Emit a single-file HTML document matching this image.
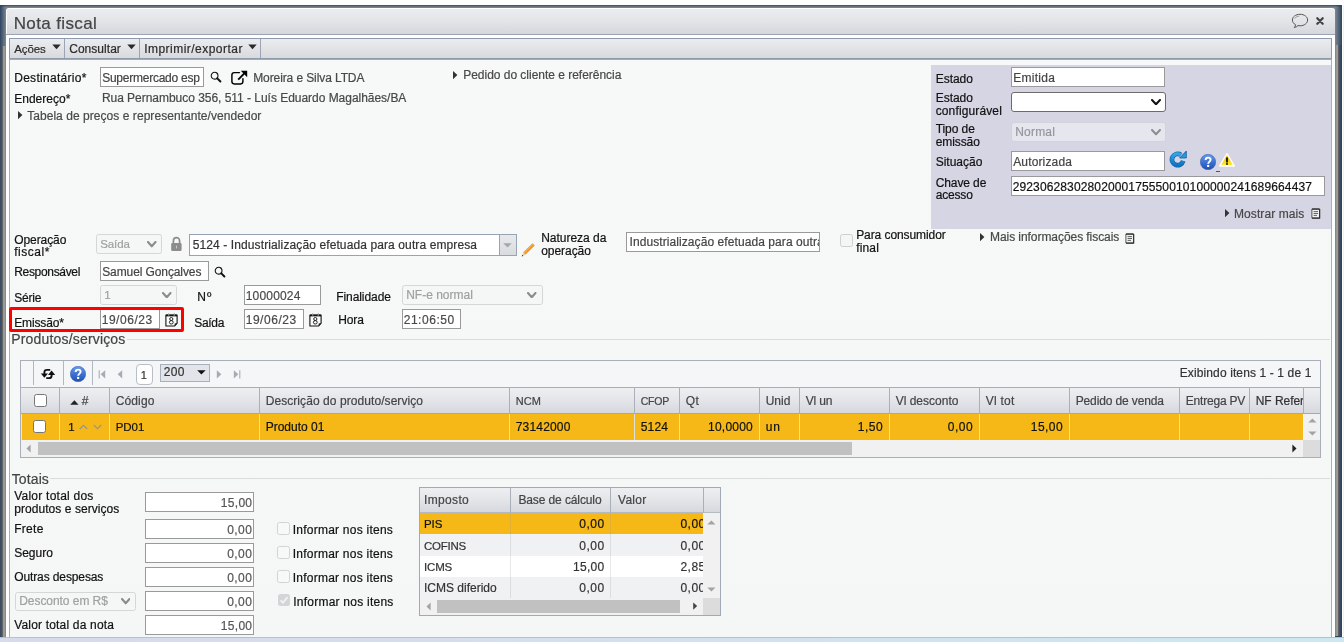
<!DOCTYPE html>
<html><head><meta charset="utf-8"><title>Nota fiscal</title><style>
html,body{margin:0;padding:0}
body{will-change:transform;width:1344px;height:642px;position:relative;overflow:hidden;background:#fff;font-family:"Liberation Sans",sans-serif;}
body div,body span,body svg{position:absolute;box-sizing:content-box}
.t{white-space:nowrap;display:block;-webkit-text-stroke:0.2px currentColor}
</style></head><body>
<div style="left:0px;top:5px;width:1342px;height:633px;background:#2f4661"></div>
<div style="left:0px;top:5px;width:1342px;height:3px;background:linear-gradient(#364b63,#636f7d 45%,#858c94)"></div>
<div style="left:1335px;top:5px;width:7px;height:3px;background:radial-gradient(ellipse 7px 3.4px at 0px 3px,#838a93 0,#6b7684 35%,#44566b 70%,#2e4560 100%)"></div>
<div style="left:0px;top:5px;width:6px;height:3px;background:radial-gradient(ellipse 6px 3.4px at 6px 3px,#838a93 0,#6b7684 35%,#44566b 70%,#2e4560 100%)"></div>
<div style="left:6px;top:8px;width:3px;height:3px;background:#838a93"></div>
<div style="left:1332px;top:8px;width:3px;height:3px;background:#838a93"></div>
<div style="left:0px;top:8px;width:6px;height:40px;background:linear-gradient(90deg,#2e4560,#808791)"></div>
<div style="left:1335px;top:8px;width:7px;height:38px;background:linear-gradient(90deg,#808791,#2e4560)"></div>
<div style="left:0px;top:46px;width:2px;height:591px;background:linear-gradient(90deg,#34485f,#46566b)"></div>
<div style="left:2px;top:46px;width:4px;height:591px;background:linear-gradient(90deg,#5c5c5c 0,#6a6a6a 25%,#999 26%,#9a9a9a 75%,#8a8a8a 76%)"></div>
<div style="left:1335px;top:45px;width:4px;height:591px;background:linear-gradient(90deg,#858789 0,#858789 25%,#999 26%,#9a9a9a 75%,#666 76%,#5c5c5c)"></div>
<div style="left:1339px;top:45px;width:3px;height:591px;background:linear-gradient(90deg,#46566b,#28405c)"></div>
<div style="left:1343px;top:5px;width:1px;height:633px;background:#f2f2f2"></div>
<div style="left:0px;top:637px;width:1344px;height:5px;background:linear-gradient(90deg,#d6dbee,#d3e0f0 50%,#cde8f3)"></div>
<div style="left:0px;top:637px;width:1344px;height:1px;background:linear-gradient(90deg,#b9bfd2,#a9c4d4)"></div>
<div style="left:6px;top:8px;width:1329px;height:629px;background:#fff;border-radius:3px 3px 0 0"></div>
<div style="left:7px;top:9px;width:1328px;height:25px;background:linear-gradient(#ebecee,#e3e4e7 50%,#d5d7dc);border-radius:2px 3px 0 0"></div>
<div style="left:6px;top:34px;width:1329px;height:1px;background:#9ca4b2"></div>
<span class="t" style="left: 13.7px; top: 14.4px; font-size: 17px; line-height: 19px; color: rgb(68, 68, 68); letter-spacing: 0.38px;">Nota fiscal</span>
<svg style="left:1290px;top:12px" width="20" height="18" viewBox="0 0 20 18"><path d="M10 2.3 C5.6 2.3 2.4 4.8 2.4 8 C2.4 10 3.6 11.7 5.6 12.7 C5.5 13.8 5 14.8 4.2 15.5 C5.8 15.3 7.1 14.6 8 13.6 C8.6 13.7 9.3 13.8 10 13.8 C14.4 13.8 17.6 11.2 17.6 8 C17.6 4.8 14.4 2.3 10 2.3Z" fill="none" stroke="#555" stroke-width="1"></path><path d="M4.6 6.6 C5.6 4.9 7.4 4.2 9.2 4.1" fill="none" stroke="#777" stroke-width="0.7"></path></svg>
<svg style="left:1315px;top:16px" width="10" height="10" viewBox="0 0 10 10"><path d="M2.3 2.3 L7.7 7.7 M7.7 2.3 L2.3 7.7" stroke="#444" stroke-width="2.3" stroke-linecap="round"></path></svg>
<div style="left:9px;top:38px;width:1321px;height:19px;border:1px solid #8f9aab;background:linear-gradient(#ebecef,#e2e3e7 50%,#d8dade)"></div>
<span class="t" style="left: 14.2px; top: 42.1px; font-size: 11.5px; line-height: 14px; color: rgb(43, 43, 43); letter-spacing: -0.07px;">Ações</span>
<svg style="left:52px;top:44px" width="9" height="6" viewBox="0 0 9 6"><path d="M0.3 0.5 L8.7 0.5 L4.5 5.2Z" fill="#2a2a2a"></path></svg>
<div style="left:64px;top:39px;width:1px;height:19px;background:#9aa4b4"></div>
<span class="t" style="left: 69.2px; top: 42.1px; font-size: 12px; line-height: 14px; color: rgb(43, 43, 43); letter-spacing: 0.04px;">Consultar</span>
<svg style="left:126.5px;top:44px" width="9" height="6" viewBox="0 0 9 6"><path d="M0.3 0.5 L8.7 0.5 L4.5 5.2Z" fill="#2a2a2a"></path></svg>
<div style="left:139px;top:39px;width:1px;height:19px;background:#9aa4b4"></div>
<span class="t" style="left: 144.2px; top: 42.1px; font-size: 12px; line-height: 14px; color: rgb(43, 43, 43); letter-spacing: 0.47px;">Imprimir/exportar</span>
<svg style="left:247.5px;top:44px" width="9" height="6" viewBox="0 0 9 6"><path d="M0.3 0.5 L8.7 0.5 L4.5 5.2Z" fill="#2a2a2a"></path></svg>
<div style="left:260px;top:39px;width:1px;height:19px;background:#9aa4b4"></div>
<div style="left:9px;top:59px;width:1323px;height:1px;background:#a3abb7"></div>
<div style="left:9px;top:60px;width:1321px;height:577px;border-left:1px solid #a7b0c0;border-right:1px solid #a7b0c0;background:linear-gradient(#f7f9f8,#f6f7f7 60%,#f5f6f6)"></div>
<span class="t" style="left: 14.2px; top: 71.1px; font-size: 12px; line-height: 14px; color: rgb(17, 17, 17); letter-spacing: 0.29px;">Destinatário*</span>
<div style="left:100px;top:67px;width:102px;height:18px;border:1px solid #9a9a9a;background:#fff;"></div>
<span class="t" style="left: 102.2px; top: 71.1px; font-size: 12px; line-height: 14px; color: rgb(68, 68, 68); letter-spacing: -0.25px;">Supermercado esp</span>
<svg style="left:209.5px;top:71.3px" width="13" height="13" viewBox="0 0 13 13"><circle cx="4.6" cy="4.7" r="3.4" fill="none" stroke="#111" stroke-width="1.05"></circle><path d="M7.3 7.4 L10.4 10.5" stroke="#111" stroke-width="2" stroke-linecap="round"></path></svg>
<svg style="left:230px;top:69px" width="19" height="17" viewBox="0 0 19 17"><path d="M9.5 3.6 H4.2 Q1.9 3.6 1.9 5.9 V12.6 Q1.9 14.9 4.2 14.9 H10.6 Q12.9 14.9 12.9 12.6 V9.6" fill="none" stroke="#000" stroke-width="1.45" stroke-linecap="round"></path><path d="M8.2 10.6 L14.6 4.2" stroke="#000" stroke-width="1.9"></path><path d="M10.8 1.8 H17.2 V8.2Z" fill="#000"></path></svg>
<span class="t" style="left: 253.2px; top: 71.1px; font-size: 12px; line-height: 14px; color: rgb(72, 72, 72); letter-spacing: -0.1px;">Moreira e Silva LTDA</span>
<svg style="left:452.9px;top:70.8px" width="5" height="9" viewBox="0 0 5 9"><path d="M0 0 L4.4 4.1 L0 8.2Z" fill="#333"></path></svg>
<span class="t" style="left: 463.2px; top: 68.3px; font-size: 12px; line-height: 14px; color: rgb(72, 72, 72); letter-spacing: -0.02px;">Pedido do cliente e referência</span>
<span class="t" style="left: 14.2px; top: 92.1px; font-size: 12px; line-height: 14px; color: rgb(17, 17, 17); letter-spacing: 0.02px;">Endereço*</span>
<span class="t" style="left: 101.9px; top: 90.9px; font-size: 12px; line-height: 14px; color: rgb(72, 72, 72); letter-spacing: -0.03px;">Rua Pernambuco 356, 511 - Luís Eduardo Magalhães/BA</span>
<svg style="left:17.8px;top:110.8px" width="5" height="9" viewBox="0 0 5 9"><path d="M0 0 L4.4 4.1 L0 8.2Z" fill="#333"></path></svg>
<span class="t" style="left: 27.2px; top: 109.1px; font-size: 12px; line-height: 14px; color: rgb(72, 72, 72); letter-spacing: 0.05px;">Tabela de preços e representante/vendedor</span>
<div style="left:931px;top:65px;width:400px;height:164px;background:#d6d5e4"></div>
<span class="t" style="left: 935.7px; top: 71.6px; font-size: 12px; line-height: 14px; color: rgb(17, 17, 17); letter-spacing: -0.03px;">Estado</span>
<div style="left:1011px;top:67px;width:152px;height:18px;border:1px solid #9a9a9a;background:#fff;"></div>
<span class="t" style="left: 1013.2px; top: 71.1px; font-size: 12px; line-height: 14px; color: rgb(68, 68, 68); letter-spacing: 0.28px;">Emitida</span>
<span class="t" style="left: 935.7px; top: 91.3px; font-size: 12px; line-height: 14px; color: rgb(17, 17, 17); letter-spacing: -0.03px;">Estado</span>
<span class="t" style="left: 935.7px; top: 104.3px; font-size: 12px; line-height: 14px; color: rgb(17, 17, 17); letter-spacing: 0.13px;">configurável</span>
<div style="left:1011px;top:92px;width:153px;height:18px;border:1px solid #6b6b6b;border-radius:3px;background:#fff"></div>
<svg style="left:1151px;top:98.5px" width="10" height="6.5" viewBox="0 0 10 6.5"><path d="M1 1 L5.0 5.3 L9 1" fill="none" stroke="#111" stroke-width="2" stroke-linecap="round" stroke-linejoin="round"></path></svg>
<span class="t" style="left: 935.7px; top: 121.9px; font-size: 12px; line-height: 14px; color: rgb(17, 17, 17); letter-spacing: -0.07px;">Tipo de</span>
<span class="t" style="left: 935.7px; top: 134.8px; font-size: 12px; line-height: 14px; color: rgb(17, 17, 17); letter-spacing: -0.08px;">emissão</span>
<div style="left:1011px;top:122px;width:153px;height:17.5px;border:1px solid #d2d2da;border-radius:3px;background:#e6e6ee"></div>
<span class="t" style="left: 1015.2px; top: 125.2px; font-size: 12px; line-height: 14px; color: rgb(150, 150, 158); letter-spacing: 0.21px;">Normal</span>
<svg style="left:1151px;top:129px" width="10" height="6.5" viewBox="0 0 10 6.5"><path d="M1 1 L5.0 5.3 L9 1" fill="none" stroke="#8c8c92" stroke-width="2" stroke-linecap="round" stroke-linejoin="round"></path></svg>
<span class="t" style="left: 935.7px; top: 155.4px; font-size: 12px; line-height: 14px; color: rgb(17, 17, 17); letter-spacing: 0px;">Situação</span>
<div style="left:1011px;top:151px;width:152px;height:18px;border:1px solid #9a9a9a;background:#fff;"></div>
<span class="t" style="left: 1013.2px; top: 155.1px; font-size: 12px; line-height: 14px; color: rgb(68, 68, 68); letter-spacing: 0.15px;">Autorizada</span>
<span class="t" style="left: 935.7px; top: 175.6px; font-size: 12px; line-height: 14px; color: rgb(17, 17, 17); letter-spacing: -0.1px;">Chave de</span>
<span class="t" style="left: 935.7px; top: 188.3px; font-size: 12px; line-height: 14px; color: rgb(17, 17, 17); letter-spacing: -0.17px;">acesso</span>
<div style="left:1011px;top:176px;width:312px;height:18px;border:1px solid #9a9a9a;background:#fff;"></div>
<span class="t" style="left: 1012.7px; top: 180.1px; font-size: 12px; line-height: 14px; color: rgb(17, 17, 17); letter-spacing: 0.13px;">29230628302802000175550010100000241689664437</span>
<svg style="left:1224.8px;top:208.9px" width="5" height="9" viewBox="0 0 5 9"><path d="M0 0 L4.4 4.1 L0 8.2Z" fill="#333"></path></svg>
<span class="t" style="left: 1234px; top: 206.6px; font-size: 12px; line-height: 14px; color: rgb(72, 72, 72); letter-spacing: 0.08px;">Mostrar mais</span>
<svg style="left:1310.5px;top:208.4px" width="10" height="11" viewBox="0 0 10 11"><rect x="0.9" y="0.9" width="7.7" height="9.2" rx="0.4" fill="#f1f1f4" stroke="#444" stroke-width="0.9"></rect><path d="M0.9 1.2 H8.6 M8.6 1 V10.1 H0.9" stroke="#333" stroke-width="1.2" fill="none"></path><path d="M2.6 3.6 H7 M2.6 5.5 H7 M2.6 7.4 H6" stroke="#555" stroke-width="0.9"></path></svg>
<span class="t" style="left: 14.2px; top: 232.9px; font-size: 12px; line-height: 14px; color: rgb(17, 17, 17); letter-spacing: -0.07px;">Operação</span>
<span class="t" style="left: 14.2px; top: 244.8px; font-size: 12px; line-height: 14px; color: rgb(17, 17, 17); letter-spacing: 0.53px;">fiscal*</span>
<div style="left:96px;top:234px;width:63.5px;height:18px;border:1px solid #d5d6d6;border-radius:2.5px;background:#f5f6f6"></div>
<span class="t" style="left: 100.2px; top: 237.1px; font-size: 11.5px; line-height: 14px; color: rgb(160, 160, 160); letter-spacing: -0.09px;">Saída</span>
<svg style="left:147.2px;top:241px" width="9.5" height="6.5" viewBox="0 0 9.5 6.5"><path d="M1 1 L4.75 5.3 L8.5 1" fill="none" stroke="#8c8c8c" stroke-width="2.1" stroke-linecap="round" stroke-linejoin="round"></path></svg>
<svg style="left:170px;top:236px" width="13" height="16" viewBox="0 0 13 16"><path d="M3.4 7.6 V5 a3.1 3.3 0 0 1 6.2 0 V7.6" fill="none" stroke="#8c8c8c" stroke-width="1.7"></path><rect x="1.2" y="7" width="10.4" height="8" rx="1.2" fill="#8c8c8c"></rect><path d="M6.5 9.6 V12.4" stroke="#c9c9c9" stroke-width="1.1"></path></svg>
<div style="left:189px;top:234px;width:326px;height:20px;border:1px solid #98a3b3;background:#fff"></div>
<div style="left:499.4px;top:235px;width:15.6px;height:20px;background:linear-gradient(#e8e9ec,#d9dbdf);border-left:1px solid #98a3b3"></div>
<svg style="left:503.4px;top:243px" width="9" height="5" viewBox="0 0 9 5"><path d="M0.2 0.2 H8.8 L4.5 4.4Z" fill="#a1a7b1"></path></svg>
<span class="t" style="left: 192.7px; top: 238.1px; font-size: 12px; line-height: 14px; color: rgb(51, 51, 51); letter-spacing: 0.11px;">5124 - Industrialização efetuada para outra empresa</span>
<svg style="left:520px;top:241px" width="17" height="17" viewBox="0 0 17 17"><path d="M4.3 12.6 L13.6 3.4" stroke="#f0962b" stroke-width="3.3"></path><path d="M3.7 11.1 L13 1.9" stroke="#f6b45c" stroke-width="0.9" transform="translate(0.25,0.95)"></path><path d="M1.8 15.4 L3.1 11.4 L5.5 13.8Z" fill="#f1d3a0"></path><path d="M1.8 15.4 L2.4 13.7 L3.4 14.7Z" fill="#222"></path></svg>
<span class="t" style="left: 541.2px; top: 231.2px; font-size: 12px; line-height: 14px; color: rgb(17, 17, 17); letter-spacing: -0.02px;">Natureza da</span>
<span class="t" style="left: 541.2px; top: 243.9px; font-size: 12px; line-height: 14px; color: rgb(17, 17, 17); letter-spacing: -0.05px;">operação</span>
<div style="left:626px;top:232px;width:192px;height:18px;border:1px solid #9a9a9a;background:#fff;"></div>
<div style="left:627px;top:233px;width:192px;height:18px;overflow:hidden"><span class="t" style="left: 2.5px; top: 2.3px; font-size: 12px; line-height: 14px; color: rgb(68, 68, 68); letter-spacing: 0.08px;">Industrialização efetuada para outra</span></div>
<div style="left:840.2px;top:234.3px;width:10.5px;height:10.5px;border:1px solid #cfcfcf;border-radius:2.5px;background:#f5f5f5"></div>
<span class="t" style="left: 856.2px; top: 228.2px; font-size: 12px; line-height: 14px; color: rgb(17, 17, 17); letter-spacing: -0.08px;">Para consumidor</span>
<span class="t" style="left: 856.2px; top: 241.1px; font-size: 12px; line-height: 14px; color: rgb(17, 17, 17); letter-spacing: 0.15px;">final</span>
<svg style="left:980px;top:232.8px" width="5" height="9" viewBox="0 0 5 9"><path d="M0 0 L4.4 4.1 L0 8.2Z" fill="#333"></path></svg>
<span class="t" style="left: 990px; top: 230.2px; font-size: 12px; line-height: 14px; color: rgb(72, 72, 72); letter-spacing: -0.06px;">Mais informações fiscais</span>
<svg style="left:1125.3px;top:232.5px" width="10" height="11" viewBox="0 0 10 11"><rect x="0.9" y="0.9" width="7.7" height="9.2" rx="0.4" fill="#f1f1f4" stroke="#444" stroke-width="0.9"></rect><path d="M0.9 1.2 H8.6 M8.6 1 V10.1 H0.9" stroke="#333" stroke-width="1.2" fill="none"></path><path d="M2.6 3.6 H7 M2.6 5.5 H7 M2.6 7.4 H6" stroke="#555" stroke-width="0.9"></path></svg>
<span class="t" style="left: 14.2px; top: 265.3px; font-size: 12px; line-height: 14px; color: rgb(17, 17, 17); letter-spacing: -0.32px;">Responsável</span>
<div style="left:100px;top:261px;width:107px;height:18px;border:1px solid #9a9a9a;background:#fff;"></div>
<span class="t" style="left: 102.2px; top: 265.1px; font-size: 12px; line-height: 14px; color: rgb(68, 68, 68); letter-spacing: -0.1px;">Samuel Gonçalves</span>
<svg style="left:214px;top:265.8px" width="13" height="13" viewBox="0 0 13 13"><circle cx="4.6" cy="4.7" r="3.4" fill="none" stroke="#111" stroke-width="1.05"></circle><path d="M7.3 7.4 L10.4 10.5" stroke="#111" stroke-width="2" stroke-linecap="round"></path></svg>
<span class="t" style="left: 14.2px; top: 290.6px; font-size: 12px; line-height: 14px; color: rgb(17, 17, 17); letter-spacing: -0.2px;">Série</span>
<div style="left:100px;top:285px;width:75px;height:18px;border:1px solid #d5d6d6;border-radius:2.5px;background:#f5f6f6"></div>
<span class="t" style="left:104.2px;top:288.9px;font-size:11.5px;line-height:13.5px;color:#a0a0a0;">1</span>
<svg style="left:162px;top:291.5px" width="9.5" height="6.5" viewBox="0 0 9.5 6.5"><path d="M1 1 L4.75 5.3 L8.5 1" fill="none" stroke="#8c8c8c" stroke-width="2.1" stroke-linecap="round" stroke-linejoin="round"></path></svg>
<span class="t" style="left: 197.2px; top: 289.6px; font-size: 12px; line-height: 14px; color: rgb(17, 17, 17); letter-spacing: 1.14px;">Nº</span>
<div style="left:244px;top:285px;width:75px;height:18px;border:1px solid #9a9a9a;background:#fff;"></div>
<span class="t" style="left: 245.7px; top: 289.1px; font-size: 12px; line-height: 14px; color: rgb(74, 74, 74); letter-spacing: 0.19px;">10000024</span>
<span class="t" style="left: 336.2px; top: 290.1px; font-size: 12px; line-height: 14px; color: rgb(17, 17, 17); letter-spacing: -0.07px;">Finalidade</span>
<div style="left:402px;top:285px;width:138.5px;height:18px;border:1px solid #d5d6d6;border-radius:2.5px;background:#f5f6f6"></div>
<span class="t" style="left: 406.2px; top: 288.4px; font-size: 12px; line-height: 14px; color: rgb(160, 160, 160); letter-spacing: 0px;">NF-e normal</span>
<svg style="left:527px;top:291.5px" width="9.5" height="6.5" viewBox="0 0 9.5 6.5"><path d="M1 1 L4.75 5.3 L8.5 1" fill="none" stroke="#8c8c8c" stroke-width="2.1" stroke-linecap="round" stroke-linejoin="round"></path></svg>
<span class="t" style="left: 14.2px; top: 315.9px; font-size: 12px; line-height: 14px; color: rgb(17, 17, 17); letter-spacing: -0.14px;">Emissão*</span>
<div style="left:100px;top:309px;width:58px;height:18px;border:1px solid #9a9a9a;background:#fff;"></div>
<span class="t" style="left: 101.7px; top: 313.1px; font-size: 12px; line-height: 14px; color: rgb(74, 74, 74); letter-spacing: 0.54px;">19/06/23</span>
<svg style="left:164.8px;top:312.5px" width="13" height="14" viewBox="0 0 13 14"><path d="M0.9 2.2 H12.1 V10.3 L9.6 13 H0.9Z" fill="#fbfbfb" stroke="#111" stroke-width="1.1"></path><path d="M0.9 2.4 H12.1" stroke="#111" stroke-width="1.9"></path><circle cx="3.8" cy="1.8" r="0.9" fill="#fbfbfb" stroke="#111" stroke-width="0.5"></circle><circle cx="9.2" cy="1.8" r="0.9" fill="#fbfbfb" stroke="#111" stroke-width="0.5"></circle><path d="M12.1 10.3 L9.6 10.4 L9.6 13Z" fill="#111"></path><ellipse cx="6.3" cy="6" rx="1.6" ry="1.5" fill="none" stroke="#111" stroke-width="0.9"></ellipse><ellipse cx="6.3" cy="9.3" rx="1.9" ry="1.75" fill="none" stroke="#111" stroke-width="0.9"></ellipse></svg>
<div style="left:9px;top:307px;width:169px;height:19px;border:3px solid #fe0000;border-radius:2px"></div>
<span class="t" style="left: 194.2px; top: 315.9px; font-size: 12px; line-height: 14px; color: rgb(17, 17, 17); letter-spacing: -0.29px;">Saída</span>
<div style="left:244px;top:309px;width:58px;height:18px;border:1px solid #9a9a9a;background:#fff;"></div>
<span class="t" style="left: 245.7px; top: 313.1px; font-size: 12px; line-height: 14px; color: rgb(74, 74, 74); letter-spacing: 0.54px;">19/06/23</span>
<svg style="left:308.8px;top:312.5px" width="13" height="14" viewBox="0 0 13 14"><path d="M0.9 2.2 H12.1 V10.3 L9.6 13 H0.9Z" fill="#fbfbfb" stroke="#111" stroke-width="1.1"></path><path d="M0.9 2.4 H12.1" stroke="#111" stroke-width="1.9"></path><circle cx="3.8" cy="1.8" r="0.9" fill="#fbfbfb" stroke="#111" stroke-width="0.5"></circle><circle cx="9.2" cy="1.8" r="0.9" fill="#fbfbfb" stroke="#111" stroke-width="0.5"></circle><path d="M12.1 10.3 L9.6 10.4 L9.6 13Z" fill="#111"></path><ellipse cx="6.3" cy="6" rx="1.6" ry="1.5" fill="none" stroke="#111" stroke-width="0.9"></ellipse><ellipse cx="6.3" cy="9.3" rx="1.9" ry="1.75" fill="none" stroke="#111" stroke-width="0.9"></ellipse></svg>
<span class="t" style="left: 338.2px; top: 313.4px; font-size: 12px; line-height: 14px; color: rgb(17, 17, 17); letter-spacing: -0.11px;">Hora</span>
<div style="left:402px;top:309px;width:57px;height:18px;border:1px solid #9a9a9a;background:#fff;"></div>
<span class="t" style="left: 403.7px; top: 313.1px; font-size: 12px; line-height: 14px; color: rgb(74, 74, 74); letter-spacing: 0.54px;">21:06:50</span>
<div style="left:11px;top:338.5px;width:1319px;height:1px;background:#d9dbdd"></div>
<div style="left:11px;top:332px;width:116px;height:14px;background:#f6f8f7"></div>
<span class="t" style="left: 11.2px; top: 331.4px; font-size: 14px; line-height: 16px; color: rgb(68, 68, 68); letter-spacing: 0.18px;">Produtos/serviços</span>
<div style="left:20px;top:360px;width:1299px;height:96px;border:1px solid #a9afb9;background:#f5f6f7"></div>
<div style="left:33px;top:361px;width:1px;height:24px;background:#b3b8c0"></div>
<div style="left:63px;top:361px;width:1px;height:24px;background:#b3b8c0"></div>
<div style="left:92px;top:361px;width:1px;height:24px;background:#b3b8c0"></div>
<svg style="left:40px;top:368px" width="16" height="12" viewBox="0 0 16 12"><path d="M10.2 1.9 H7 Q4.4 1.9 4.4 4.3 V6" fill="none" stroke="#111" stroke-width="1.9"></path><path d="M0.8 5.4 H8 L4.4 9.8Z" fill="#111"></path><path d="M6.2 10.1 H9 Q11.6 10.1 11.6 7.7 V6.4" fill="none" stroke="#111" stroke-width="1.9"></path><path d="M8 6.9 H15.2 L11.6 2.5Z" fill="#111"></path></svg>
<svg style="left:70px;top:366px" width="16" height="16" viewBox="0 0 16 16"><defs><linearGradient id="hg70" x1="0" y1="0" x2="0" y2="1"><stop offset="0" stop-color="#6a9bea"></stop><stop offset="0.55" stop-color="#3a6fd0"></stop><stop offset="1" stop-color="#2450ae"></stop></linearGradient></defs><circle cx="8" cy="8" r="7.7" fill="url(#hg70)" stroke="#2b55b0" stroke-width="0.5"></circle><path d="M5.6 6.1 C5.6 4.5 6.6 3.6 8.1 3.6 C9.6 3.6 10.6 4.5 10.6 5.8 C10.6 7.6 8.2 7.7 8.2 9.8" fill="none" stroke="#fff" stroke-width="1.9"></path><rect x="7.1" y="10.9" width="2.1" height="2.1" fill="#fff"></rect></svg>
<svg style="left:98px;top:370px" width="8" height="9" viewBox="0 0 8 9"><path d="M1.2 0.2 V8.4" stroke="#a6acb5" stroke-width="1.1"></path><path d="M7.2 0.2 V8.4 L2.6 4.3Z" fill="#a6acb5"></path></svg>
<svg style="left:117px;top:370px" width="6" height="9" viewBox="0 0 6 9"><path d="M5.2 0.2 V8.4 L0.6 4.3Z" fill="#a6acb5"></path></svg>
<div style="left:136px;top:363.5px;width:15px;height:19.5px;border:1px solid #b9bdc4;border-radius:4px;background:#fff"></div>
<span class="t" style="left:140.7px;top:368.7px;font-size:11px;line-height:13px;color:#333;">1</span>
<div style="left:160px;top:363.5px;width:48px;height:16.5px;border:1px solid #a9b0bb;background:#e2e4e9"></div>
<span class="t" style="left: 163.7px; top: 365.4px; font-size: 12px; line-height: 14px; color: rgb(51, 51, 51); letter-spacing: 0.33px;">200</span>
<svg style="left:196.5px;top:370px" width="9" height="5" viewBox="0 0 9 5"><path d="M0.2 0.3 H8.6 L4.4 4.6Z" fill="#111"></path></svg>
<svg style="left:216px;top:370px" width="6" height="9" viewBox="0 0 6 9"><path d="M0.8 0.2 V8.4 L5.4 4.3Z" fill="#a6acb5"></path></svg>
<svg style="left:233px;top:370px" width="8" height="9" viewBox="0 0 8 9"><path d="M6.8 0.2 V8.4" stroke="#a6acb5" stroke-width="1.1"></path><path d="M0.8 0.2 V8.4 L5.4 4.3Z" fill="#a6acb5"></path></svg>
<span class="t" style="left: 1179.7px; top: 366.4px; font-size: 12px; line-height: 14px; color: rgb(51, 51, 51); letter-spacing: 0.12px;">Exibindo itens 1 - 1 de 1</span>
<div style="left:21px;top:387px;width:1299px;height:24.5px;background:linear-gradient(#eeeff1,#e4e5e9 50%,#d6d8dd);border-top:1px solid #a9afb9;border-bottom:1px solid #a2a9b5"></div>
<div style="left:59px;top:388px;width:1px;height:25px;background:#aab0ba"></div>
<div style="left:109px;top:388px;width:1px;height:25px;background:#aab0ba"></div>
<div style="left:259px;top:388px;width:1px;height:25px;background:#aab0ba"></div>
<div style="left:509px;top:388px;width:1px;height:25px;background:#aab0ba"></div>
<div style="left:634px;top:388px;width:1px;height:25px;background:#aab0ba"></div>
<div style="left:679px;top:388px;width:1px;height:25px;background:#aab0ba"></div>
<div style="left:759px;top:388px;width:1px;height:25px;background:#aab0ba"></div>
<div style="left:799px;top:388px;width:1px;height:25px;background:#aab0ba"></div>
<div style="left:889px;top:388px;width:1px;height:25px;background:#aab0ba"></div>
<div style="left:979px;top:388px;width:1px;height:25px;background:#aab0ba"></div>
<div style="left:1069px;top:388px;width:1px;height:25px;background:#aab0ba"></div>
<div style="left:1179px;top:388px;width:1px;height:25px;background:#aab0ba"></div>
<div style="left:1249px;top:388px;width:1px;height:25px;background:#aab0ba"></div>
<div style="left:1303px;top:388px;width:1px;height:25px;background:#aab0ba"></div>
<div style="left:21px;top:413.5px;width:1282px;height:26px;background:#f5b817"></div>
<div style="left:21px;top:413.5px;width:1px;height:26px;background:#e3e6ee"></div>
<div style="left:59px;top:413.5px;width:1px;height:26px;background:#dfe0d8"></div>
<div style="left:109px;top:413.5px;width:1px;height:26px;background:#dfe0d8"></div>
<div style="left:259px;top:413.5px;width:1px;height:26px;background:#dfe0d8"></div>
<div style="left:509px;top:413.5px;width:1px;height:26px;background:#dfe0d8"></div>
<div style="left:634px;top:413.5px;width:1px;height:26px;background:#dfe0d8"></div>
<div style="left:679px;top:413.5px;width:1px;height:26px;background:#dfe0d8"></div>
<div style="left:759px;top:413.5px;width:1px;height:26px;background:#dfe0d8"></div>
<div style="left:799px;top:413.5px;width:1px;height:26px;background:#dfe0d8"></div>
<div style="left:889px;top:413.5px;width:1px;height:26px;background:#dfe0d8"></div>
<div style="left:979px;top:413.5px;width:1px;height:26px;background:#dfe0d8"></div>
<div style="left:1069px;top:413.5px;width:1px;height:26px;background:#dfe0d8"></div>
<div style="left:1179px;top:413.5px;width:1px;height:26px;background:#dfe0d8"></div>
<div style="left:1249px;top:413.5px;width:1px;height:26px;background:#dfe0d8"></div>
<div style="left:34px;top:394px;width:11px;height:11px;border:1px solid #767676;border-radius:2.5px;background:#fff"></div>
<div style="left:32.5px;top:420px;width:11px;height:11px;border:1px solid #767676;border-radius:2.5px;background:#fff"></div>
<svg style="left:69.5px;top:399.5px" width="9" height="5" viewBox="0 0 9 5"><path d="M0.2 4.7 H8.6 L4.4 0.3Z" fill="#222"></path></svg>
<span class="t" style="left:81.7px;top:394.4px;font-size:12px;line-height:14px;color:#444;">#</span>
<span class="t" style="left: 115.7px; top: 394.4px; font-size: 12px; line-height: 14px; color: rgb(68, 68, 68); letter-spacing: 0.13px;">Código</span>
<span class="t" style="left: 265.7px; top: 394.4px; font-size: 12px; line-height: 14px; color: rgb(68, 68, 68); letter-spacing: 0.07px;">Descrição do produto/serviço</span>
<span class="t" style="left: 515.7px; top: 394.4px; font-size: 11px; line-height: 14px; color: rgb(68, 68, 68); letter-spacing: 0.07px;">NCM</span>
<span class="t" style="left: 640.7px; top: 394.4px; font-size: 10.5px; line-height: 14px; color: rgb(68, 68, 68); letter-spacing: -0.16px;">CFOP</span>
<span class="t" style="left: 685.7px; top: 394.4px; font-size: 12px; line-height: 14px; color: rgb(68, 68, 68); letter-spacing: 0.53px;">Qt</span>
<span class="t" style="left: 765.7px; top: 394.4px; font-size: 12px; line-height: 14px; color: rgb(68, 68, 68); letter-spacing: 0px;">Unid</span>
<span class="t" style="left: 805.7px; top: 394.4px; font-size: 12px; line-height: 14px; color: rgb(68, 68, 68); letter-spacing: -0.16px;">Vl un</span>
<span class="t" style="left: 895.7px; top: 394.4px; font-size: 12px; line-height: 14px; color: rgb(68, 68, 68); letter-spacing: 0px;">Vl desconto</span>
<span class="t" style="left: 985.7px; top: 394.4px; font-size: 12px; line-height: 14px; color: rgb(68, 68, 68); letter-spacing: 0.27px;">Vl tot</span>
<span class="t" style="left: 1075.7px; top: 394.4px; font-size: 12px; line-height: 14px; color: rgb(68, 68, 68); letter-spacing: -0.13px;">Pedido de venda</span>
<span class="t" style="left: 1185.7px; top: 394.4px; font-size: 12px; line-height: 14px; color: rgb(68, 68, 68); letter-spacing: -0.19px;">Entrega PV</span>
<div style="left:1250px;top:388px;width:53px;height:24px;overflow:hidden"><span class="t" style="left: 5.7px; top: 6.2px; font-size: 12px; line-height: 14px; color: rgb(51, 51, 51); letter-spacing: -0.04px;">NF Referenciada</span></div>
<span class="t" style="left:68.2px;top:420.6px;font-size:11.5px;line-height:13.5px;color:#111;">1</span>
<svg style="left:79px;top:423.5px" width="9" height="6" viewBox="0 0 9 6"><path d="M0.8 5 L4.5 1.3 L8.2 5" fill="none" stroke="#9c9486" stroke-width="1.1"></path></svg>
<svg style="left:92.5px;top:424px" width="9" height="6" viewBox="0 0 9 6"><path d="M0.8 1 L4.5 4.7 L8.2 1" fill="none" stroke="#9c9486" stroke-width="1.1"></path></svg>
<span class="t" style="left: 115.7px; top: 420.4px; font-size: 11.5px; line-height: 14px; color: rgb(17, 17, 17); letter-spacing: -0.03px;">PD01</span>
<span class="t" style="left: 265.7px; top: 420.4px; font-size: 12px; line-height: 14px; color: rgb(17, 17, 17); letter-spacing: 0px;">Produto 01</span>
<span class="t" style="left: 515.7px; top: 420.4px; font-size: 12px; line-height: 14px; color: rgb(17, 17, 17); letter-spacing: 0.19px;">73142000</span>
<span class="t" style="left: 640.7px; top: 420.4px; font-size: 12px; line-height: 14px; color: rgb(17, 17, 17); letter-spacing: 0.17px;">5124</span>
<span class="t" style="right: 591px; top: 420.4px; font-size: 12px; line-height: 14px; color: rgb(17, 17, 17); letter-spacing: 0.22px;">10,0000</span>
<span class="t" style="left: 765.7px; top: 420.4px; font-size: 12px; line-height: 14px; color: rgb(17, 17, 17); letter-spacing: 0.84px;">un</span>
<span class="t" style="right: 461px; top: 420.4px; font-size: 12px; line-height: 14px; color: rgb(17, 17, 17); letter-spacing: 0.45px;">1,50</span>
<span class="t" style="right: 371px; top: 420.4px; font-size: 12px; line-height: 14px; color: rgb(17, 17, 17); letter-spacing: 0.45px;">0,00</span>
<span class="t" style="right: 281px; top: 420.4px; font-size: 12px; line-height: 14px; color: rgb(17, 17, 17); letter-spacing: 0.42px;">15,00</span>
<div style="left:1304px;top:413.5px;width:16px;height:26px;background:#f1f1f1"></div>
<svg style="left:1307.5px;top:418px" width="9" height="5" viewBox="0 0 9 5"><path d="M0.3 4.6 H8.5 L4.4 0.5Z" fill="#a3a3a3"></path></svg>
<svg style="left:1307.5px;top:430.5px" width="9" height="5" viewBox="0 0 9 5"><path d="M0.3 0.4 H8.5 L4.4 4.5Z" fill="#a3a3a3"></path></svg>
<div style="left:21px;top:439.5px;width:1282px;height:17.5px;background:#f1f1f1"></div>
<div style="left:38px;top:442px;width:814px;height:13px;background:#c1c1c1"></div>
<svg style="left:26px;top:444px" width="5" height="9" viewBox="0 0 5 9"><path d="M4.6 0.4 V8.4 L0.5 4.4Z" fill="#a3a3a3"></path></svg>
<svg style="left:1291.5px;top:444px" width="5" height="9" viewBox="0 0 5 9"><path d="M0.4 0.4 V8.4 L4.5 4.4Z" fill="#222"></path></svg>
<div style="left:1303px;top:439.5px;width:17px;height:17.5px;background:#dcdcdc"></div>
<div style="left:11px;top:477.5px;width:1319px;height:1px;background:#d9dbdd"></div>
<div style="left:11px;top:471px;width:39px;height:14px;background:#f6f8f7"></div>
<span class="t" style="left: 11.7px; top: 471.4px; font-size: 14px; line-height: 16px; color: rgb(68, 68, 68); letter-spacing: 0.12px;">Totais</span>
<span class="t" style="left: 14.2px; top: 489.3px; font-size: 12px; line-height: 14px; color: rgb(17, 17, 17); letter-spacing: 0.24px;">Valor total dos</span>
<span class="t" style="left: 14.2px; top: 502.1px; font-size: 12px; line-height: 14px; color: rgb(17, 17, 17); letter-spacing: 0.06px;">produtos e serviços</span>
<div style="left:145px;top:492px;width:107px;height:18px;border:1px solid #9a9a9a;background:#fff;"></div>
<span class="t" style="right: 1091.7px; top: 496.1px; font-size: 12px; line-height: 14px; color: rgb(85, 85, 85); letter-spacing: 0.29px;">15,00</span>
<span class="t" style="left: 14.2px; top: 522.3px; font-size: 12px; line-height: 14px; color: rgb(17, 17, 17); letter-spacing: 0.3px;">Frete</span>
<div style="left:145px;top:519px;width:107px;height:18px;border:1px solid #9a9a9a;background:#fff;"></div>
<span class="t" style="right: 1091.7px; top: 523.1px; font-size: 12px; line-height: 14px; color: rgb(85, 85, 85); letter-spacing: 0.45px;">0,00</span>
<div style="left:277px;top:522.2px;width:11px;height:11px;border:1px solid #d2d3d3;border-radius:2.5px;background:#f7f8f8"></div>
<span class="t" style="left: 292.7px; top: 523.1px; font-size: 12px; line-height: 14px; color: rgb(17, 17, 17); letter-spacing: 0.24px;">Informar nos itens</span>
<span class="t" style="left: 14.2px; top: 546.3px; font-size: 12px; line-height: 14px; color: rgb(17, 17, 17); letter-spacing: 0px;">Seguro</span>
<div style="left:145px;top:543px;width:107px;height:18px;border:1px solid #9a9a9a;background:#fff;"></div>
<span class="t" style="right: 1091.7px; top: 547.1px; font-size: 12px; line-height: 14px; color: rgb(85, 85, 85); letter-spacing: 0.45px;">0,00</span>
<div style="left:277px;top:546.2px;width:11px;height:11px;border:1px solid #d2d3d3;border-radius:2.5px;background:#f7f8f8"></div>
<span class="t" style="left: 292.7px; top: 547.1px; font-size: 12px; line-height: 14px; color: rgb(17, 17, 17); letter-spacing: 0.24px;">Informar nos itens</span>
<span class="t" style="left: 14.2px; top: 570.3px; font-size: 12px; line-height: 14px; color: rgb(17, 17, 17); letter-spacing: -0.11px;">Outras despesas</span>
<div style="left:145px;top:567px;width:107px;height:18px;border:1px solid #9a9a9a;background:#fff;"></div>
<span class="t" style="right: 1091.7px; top: 571.1px; font-size: 12px; line-height: 14px; color: rgb(85, 85, 85); letter-spacing: 0.45px;">0,00</span>
<div style="left:277px;top:570.2px;width:11px;height:11px;border:1px solid #d2d3d3;border-radius:2.5px;background:#f7f8f8"></div>
<span class="t" style="left: 292.7px; top: 571.1px; font-size: 12px; line-height: 14px; color: rgb(17, 17, 17); letter-spacing: 0.24px;">Informar nos itens</span>
<div style="left:15px;top:591.5px;width:118.5px;height:17.5px;border:1px solid #d5d6d6;border-radius:2.5px;background:#f5f6f6"></div>
<span class="t" style="left: 19.2px; top: 594.4px; font-size: 12px; line-height: 14px; color: rgb(160, 160, 160); letter-spacing: -0.05px;">Desconto em R$</span>
<svg style="left:120.8px;top:598px" width="9.5" height="6.5" viewBox="0 0 9.5 6.5"><path d="M1 1 L4.75 5.3 L8.5 1" fill="none" stroke="#8c8c8c" stroke-width="2.1" stroke-linecap="round" stroke-linejoin="round"></path></svg>
<div style="left:145px;top:591px;width:107px;height:18px;border:1px solid #9a9a9a;background:#fff;"></div>
<span class="t" style="right: 1091.7px; top: 595.1px; font-size: 12px; line-height: 14px; color: rgb(85, 85, 85); letter-spacing: 0.45px;">0,00</span>
<div style="left:278px;top:593.7px;width:12px;height:12px;border-radius:2.5px;background:#d4d5d6"></div>
<svg style="left:278px;top:593.7px" width="12" height="12" viewBox="0 0 12 12"><path d="M2.6 6.3 L5 8.7 L9.6 3.2" fill="none" stroke="#f2f2f2" stroke-width="1.8"></path></svg>
<span class="t" style="left: 293.2px; top: 595.4px; font-size: 12px; line-height: 14px; color: rgb(17, 17, 17); letter-spacing: 0.24px;">Informar nos itens</span>
<span class="t" style="left: 14.2px; top: 617.9px; font-size: 12px; line-height: 14px; color: rgb(17, 17, 17); letter-spacing: 0.18px;">Valor total da nota</span>
<div style="left:145px;top:615px;width:107px;height:18px;border:1px solid #9a9a9a;background:#fff;"></div>
<span class="t" style="right: 1091.7px; top: 619.1px; font-size: 12px; line-height: 14px; color: rgb(85, 85, 85); letter-spacing: 0.29px;">15,00</span>
<div style="left:419px;top:487px;width:300px;height:127px;border:1px solid #a2a9b6;background:#f1f1f1"></div>
<div style="left:420px;top:488px;width:300px;height:24px;background:linear-gradient(#eeeff1,#e4e5e9 50%,#d6d8dd);border-bottom:1px solid #b4b9c2"></div>
<div style="left:510px;top:488px;width:1px;height:25px;background:#aab0ba"></div>
<div style="left:610px;top:488px;width:1px;height:25px;background:#aab0ba"></div>
<div style="left:703px;top:488px;width:1px;height:25px;background:#aab0ba"></div>
<span class="t" style="left: 424px; top: 493.4px; font-size: 12px; line-height: 14px; color: rgb(68, 68, 68); letter-spacing: 0.34px;">Imposto</span>
<span class="t" style="left: 518.4px; top: 493.4px; font-size: 12px; line-height: 14px; color: rgb(68, 68, 68); letter-spacing: -0.11px;">Base de cálculo</span>
<span class="t" style="left: 618px; top: 493.4px; font-size: 12px; line-height: 14px; color: rgb(68, 68, 68); letter-spacing: 0.27px;">Valor</span>
<div style="left:420px;top:513px;width:283px;height:21px;background:#f5b817"></div>
<span class="t" style="left: 424px; top: 517.4px; font-size: 11.5px; line-height: 14px; color: rgb(17, 17, 17); letter-spacing: -0.07px;">PIS</span>
<span class="t" style="right: 739.5px; top: 517.4px; font-size: 12px; line-height: 14px; color: rgb(17, 17, 17); letter-spacing: 0.45px;">0,00</span>
<div style="left:611px;top:513px;width:92px;height:21px;overflow:hidden"><span class="t" style="left: 69.5px; top: 4.4px; font-size: 12px; line-height: 14px; color: rgb(17, 17, 17); letter-spacing: 0.45px;">0,00</span></div>
<div style="left:420px;top:534px;width:283px;height:22px;background:#f0f1f3"></div>
<span class="t" style="left: 424px; top: 538.9px; font-size: 11.5px; line-height: 14px; color: rgb(51, 51, 51); letter-spacing: -0.25px;">COFINS</span>
<span class="t" style="right: 739.5px; top: 538.9px; font-size: 12px; line-height: 14px; color: rgb(51, 51, 51); letter-spacing: 0.45px;">0,00</span>
<div style="left:611px;top:534px;width:92px;height:22px;overflow:hidden"><span class="t" style="left: 69.5px; top: 4.9px; font-size: 12px; line-height: 14px; color: rgb(51, 51, 51); letter-spacing: 0.45px;">0,00</span></div>
<div style="left:420px;top:556px;width:283px;height:21px;background:#ffffff"></div>
<span class="t" style="left: 424px; top: 560.4px; font-size: 11.5px; line-height: 14px; color: rgb(51, 51, 51); letter-spacing: -0.18px;">ICMS</span>
<span class="t" style="right: 739.5px; top: 560.4px; font-size: 12px; line-height: 14px; color: rgb(51, 51, 51); letter-spacing: 0.29px;">15,00</span>
<div style="left:611px;top:556px;width:92px;height:21px;overflow:hidden"><span class="t" style="left: 69.5px; top: 4.4px; font-size: 12px; line-height: 14px; color: rgb(51, 51, 51); letter-spacing: 0.45px;">2,85</span></div>
<div style="left:420px;top:577px;width:283px;height:21px;background:#f0f1f3"></div>
<span class="t" style="left: 424px; top: 581.4px; font-size: 12px; line-height: 14px; color: rgb(51, 51, 51); letter-spacing: 0px;">ICMS diferido</span>
<span class="t" style="right: 739.5px; top: 581.4px; font-size: 12px; line-height: 14px; color: rgb(51, 51, 51); letter-spacing: 0.45px;">0,00</span>
<div style="left:611px;top:577px;width:92px;height:21px;overflow:hidden"><span class="t" style="left: 69.5px; top: 4.4px; font-size: 12px; line-height: 14px; color: rgb(51, 51, 51); letter-spacing: 0.45px;">0,00</span></div>
<div style="left:510px;top:513px;width:1px;height:85px;background:rgba(150,150,150,0.22)"></div>
<div style="left:610px;top:513px;width:1px;height:85px;background:rgba(150,150,150,0.22)"></div>
<div style="left:703px;top:513px;width:17px;height:85px;background:#f1f1f1"></div>
<svg style="left:707px;top:519.5px" width="9" height="5" viewBox="0 0 9 5"><path d="M0.3 4.6 H8.5 L4.4 0.5Z" fill="#a3a3a3"></path></svg>
<svg style="left:707px;top:586.5px" width="9" height="5" viewBox="0 0 9 5"><path d="M0.3 0.4 H8.5 L4.4 4.5Z" fill="#a3a3a3"></path></svg>
<div style="left:420px;top:598px;width:283px;height:17px;background:#f1f1f1"></div>
<div style="left:437px;top:600px;width:243px;height:13px;background:#c1c1c1"></div>
<svg style="left:426px;top:602px" width="5" height="9" viewBox="0 0 5 9"><path d="M4.6 0.4 V8.4 L0.5 4.4Z" fill="#a3a3a3"></path></svg>
<svg style="left:692.8px;top:602.4px" width="5" height="9" viewBox="0 0 5 9"><path d="M0.2 0.4 V7.8 L4.2 4.1Z" fill="#444"></path></svg>
<div style="left:703px;top:598px;width:17px;height:17px;background:#dcdcdc"></div>
<svg style="left:1169px;top:150px" width="18" height="18" viewBox="0 0 18 18"><defs><linearGradient id="rg" x1="0" y1="0" x2="0" y2="1"><stop offset="0" stop-color="#35a5e4"></stop><stop offset="1" stop-color="#0d74c2"></stop></linearGradient></defs><path d="M11.97 4.83 A5.7 5.7 0 1 0 14.2 10.98" fill="none" stroke="#0b67b0" stroke-width="4.7"></path><path d="M17.3 1.1 V8 H10.6Z" fill="#0b67b0" stroke="#0b67b0" stroke-width="0.8" stroke-linejoin="round"></path><path d="M11.97 4.83 A5.7 5.7 0 1 0 14.2 10.98" fill="none" stroke="url(#rg)" stroke-width="3.3"></path><path d="M16.9 2.2 V7.6 H11.6Z" fill="#2b9ade"></path></svg>
<svg style="left:1200px;top:154px" width="16" height="16" viewBox="0 0 16 16"><defs><linearGradient id="hg1200" x1="0" y1="0" x2="0" y2="1"><stop offset="0" stop-color="#6a9bea"></stop><stop offset="0.55" stop-color="#3a6fd0"></stop><stop offset="1" stop-color="#2450ae"></stop></linearGradient></defs><circle cx="8" cy="8" r="7.7" fill="url(#hg1200)" stroke="#2b55b0" stroke-width="0.5"></circle><path d="M5.6 6.1 C5.6 4.5 6.6 3.6 8.1 3.6 C9.6 3.6 10.6 4.5 10.6 5.8 C10.6 7.6 8.2 7.7 8.2 9.8" fill="none" stroke="#fff" stroke-width="1.9"></path><rect x="7.1" y="10.9" width="2.1" height="2.1" fill="#fff"></rect></svg>
<div style="left:1215.5px;top:171px;width:4px;height:1px;background:#555"></div>
<svg style="left:1218px;top:152px" width="18" height="16" viewBox="0 0 18 16"><defs><linearGradient id="wg" x1="0" y1="0" x2="0" y2="1"><stop offset="0" stop-color="#f0b000"></stop><stop offset="1" stop-color="#ffee30"></stop></linearGradient></defs><path d="M9 1.9 L16.2 14 H1.8Z" fill="#fff" stroke="#fff" stroke-width="1.6" stroke-linejoin="round"></path><path d="M9 3 L14.9 13.1 H3.1Z" fill="url(#wg)"></path><path d="M9 5.4 V10.4" stroke="#111" stroke-width="1.8"></path><rect x="8.1" y="11.2" width="1.8" height="1.6" fill="#111"></rect></svg>

</body></html>
